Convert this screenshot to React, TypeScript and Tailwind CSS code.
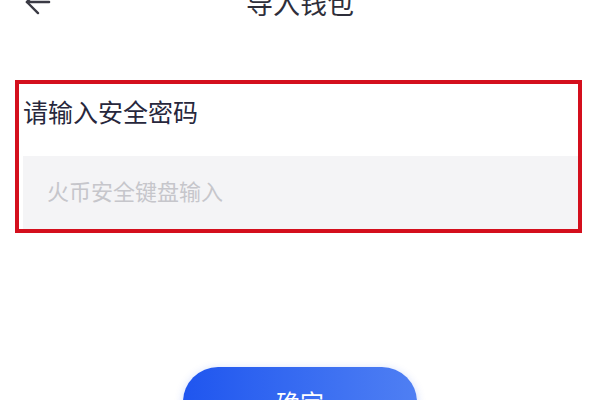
import { ArrowLeft } from "lucide-react"

const cjk = {
  fontFamily: '"Noto Sans CJK SC", "Noto Sans", sans-serif',
}

function Header() {
  return (
    <header className="relative -mt-[24px] flex h-[50px] items-center justify-center">
      <button className="absolute left-[19px] text-[#3a3a44]">
        <ArrowLeft size={38} strokeWidth={1.5} />
      </button>
      <h1 className="text-[27px] font-normal leading-none text-[#2e2e3a]">
        导入钱包
      </h1>
    </header>
  )
}

function PasswordField() {
  return (
    <section className="ml-[15px] mt-[53px] w-[567px] border-4 border-[#d40f1d] bg-white pl-[4px]">
      <div className="h-[72px] pt-[9px] text-[25px] leading-[36px] text-[#27273c]">
        请输入安全密码
      </div>
      <div className="flex h-[73px] items-center bg-[#f4f4f6] pb-[4px] pl-[24px] text-[22px] text-[#c6c6cb]">
        火币安全键盘输入
      </div>
    </section>
  )
}

export default function App() {
  return (
    <div
      className="h-[400px] w-[600px] overflow-hidden bg-white pt-px"
      style={cjk}
    >
      <Header />
      <PasswordField />
      <div className="mt-[134px] flex justify-center">
        <button className="h-[70px] w-[234px] shrink-0 rounded-full bg-gradient-to-r from-[#1f55ef] to-[#4f7ff3] text-[24px] text-white shadow-[0_2px_8px_rgba(40,90,240,0.25)]">
          确定
        </button>
      </div>
    </div>
  )
}
